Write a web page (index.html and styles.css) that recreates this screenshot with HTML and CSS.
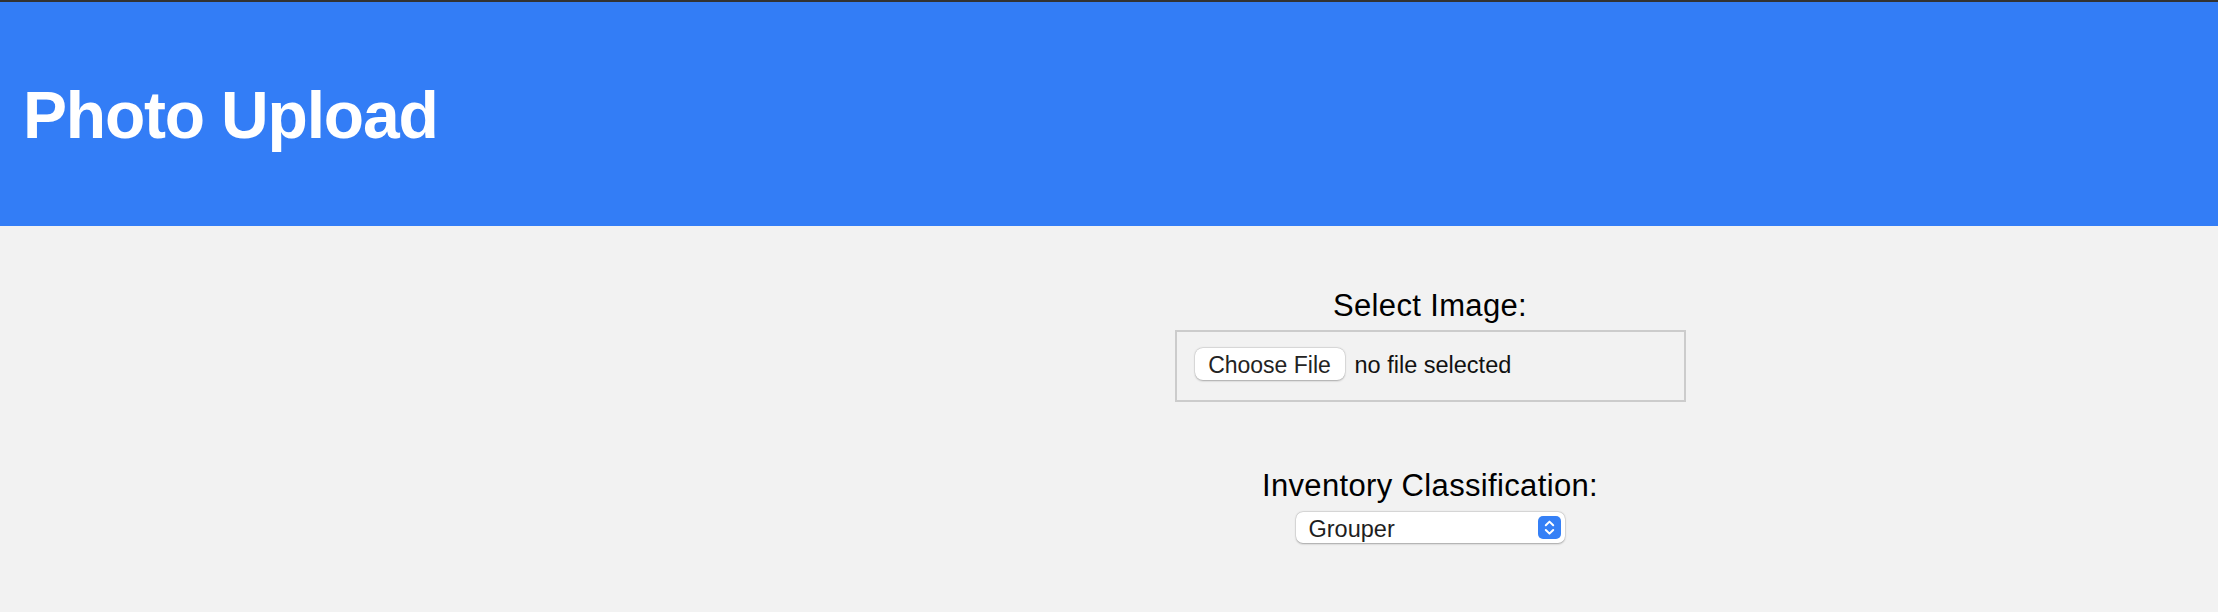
FILE: index.html
```html
<!DOCTYPE html>
<html lang="en">
<head>
<meta charset="utf-8">
<title>Photo Upload</title>
<link rel="stylesheet" href="styles.css">
</head>
<body>
  <header class="topbar">
    <h1 class="title">Photo Upload</h1>
  </header>
  <main class="layout">
    <div class="preview"></div>
    <form class="form">
      <div class="group group-file">
        <label class="field-label" for="photo">Select Image:</label>
        <div class="file-box">
          <button type="button" class="file-btn" id="photo">Choose File</button>
          <span class="file-status">no file selected</span>
        </div>
      </div>
      <div class="group group-select">
        <label class="field-label" for="inv">Inventory Classification:</label>
        <div class="select-wrap">
          <select class="select" id="inv">
            <option>Grouper</option>
            <option>Snapper</option>
            <option>Tuna</option>
          </select>
          <svg class="stepper" width="23" height="23" viewBox="0 0 23 23" aria-hidden="true">
            <rect x="0" y="0" width="23" height="23" rx="5" fill="#3580f6"/>
            <path d="M7.8 9.2 L11.5 5.6 L15.2 9.2" fill="none" stroke="#fff" stroke-width="2" stroke-linecap="round" stroke-linejoin="round"/>
            <path d="M7.8 14 L11.5 17.6 L15.2 14" fill="none" stroke="#fff" stroke-width="2" stroke-linecap="round" stroke-linejoin="round"/>
          </svg>
        </div>
      </div>
    </form>
  </main>
</body>
</html>
```
FILE: styles.css
```css
html, body {
  margin: 0;
  padding: 0;
}

body {
  background: #f2f2f2;
  font-family: "Liberation Sans", Arial, Helvetica, sans-serif;
  color: #000;
  border-top: 2px solid #323232;
  min-height: 610px;
}

.topbar {
  background: #337df6;
  height: 224px;
  box-sizing: border-box;
  padding: 80px 20px 0 23px;
}

.title {
  margin: 0;
  color: #fff;
  font-size: 66px;
  line-height: 66px;
  font-weight: 700;
  letter-spacing: -1.2px;
}

.layout {
  display: grid;
  grid-template-columns: 642px 1fr;
  padding-top: 63px;
}

.form {
  display: flex;
  flex-direction: column;
  align-items: center;
}

.group {
  display: flex;
  flex-direction: column;
  align-items: center;
}

.field-label {
  font-size: 31px;
  line-height: 34px;
  letter-spacing: 0.35px;
  color: #000;
}

.file-box {
  margin-top: 7px;
  width: 511px;
  box-sizing: border-box;
  border: 2px solid #cccccc;
  padding: 16px 18px 20px;
  display: flex;
  align-items: baseline;
  gap: 10px;
}

.file-btn {
  width: 150px;
  height: 32px;
  box-sizing: border-box;
  padding: 3px 0 0;
  border: 0;
  border-radius: 8px;
  background: #fff;
  box-shadow: 0 0.5px 2px rgba(0, 0, 0, 0.28), 0 0 0 0.5px rgba(0, 0, 0, 0.08);
  font-family: "Liberation Sans", Arial, Helvetica, sans-serif;
  font-size: 23px;
  color: #232323;
  line-height: 29px;
}

.file-status {
  font-size: 23.5px;
  color: #111;
}

.group-select {
  margin-top: 67px;
}

.select-wrap {
  position: relative;
  margin-top: 9px;
  width: 269px;
  height: 31px;
}

.select {
  appearance: none;
  -webkit-appearance: none;
  width: 100%;
  height: 100%;
  box-sizing: border-box;
  border: 0;
  border-radius: 7px;
  background: #fff;
  box-shadow: 0 0.5px 2px rgba(0, 0, 0, 0.3), 0 0 0 0.5px rgba(0, 0, 0, 0.08);
  padding: 2px 34px 0 13px;
  font-family: "Liberation Sans", Arial, Helvetica, sans-serif;
  font-size: 23.5px;
  color: #1e1e1e;
  outline: none;
}

.stepper {
  position: absolute;
  right: 4px;
  top: 4px;
  display: block;
}
```
